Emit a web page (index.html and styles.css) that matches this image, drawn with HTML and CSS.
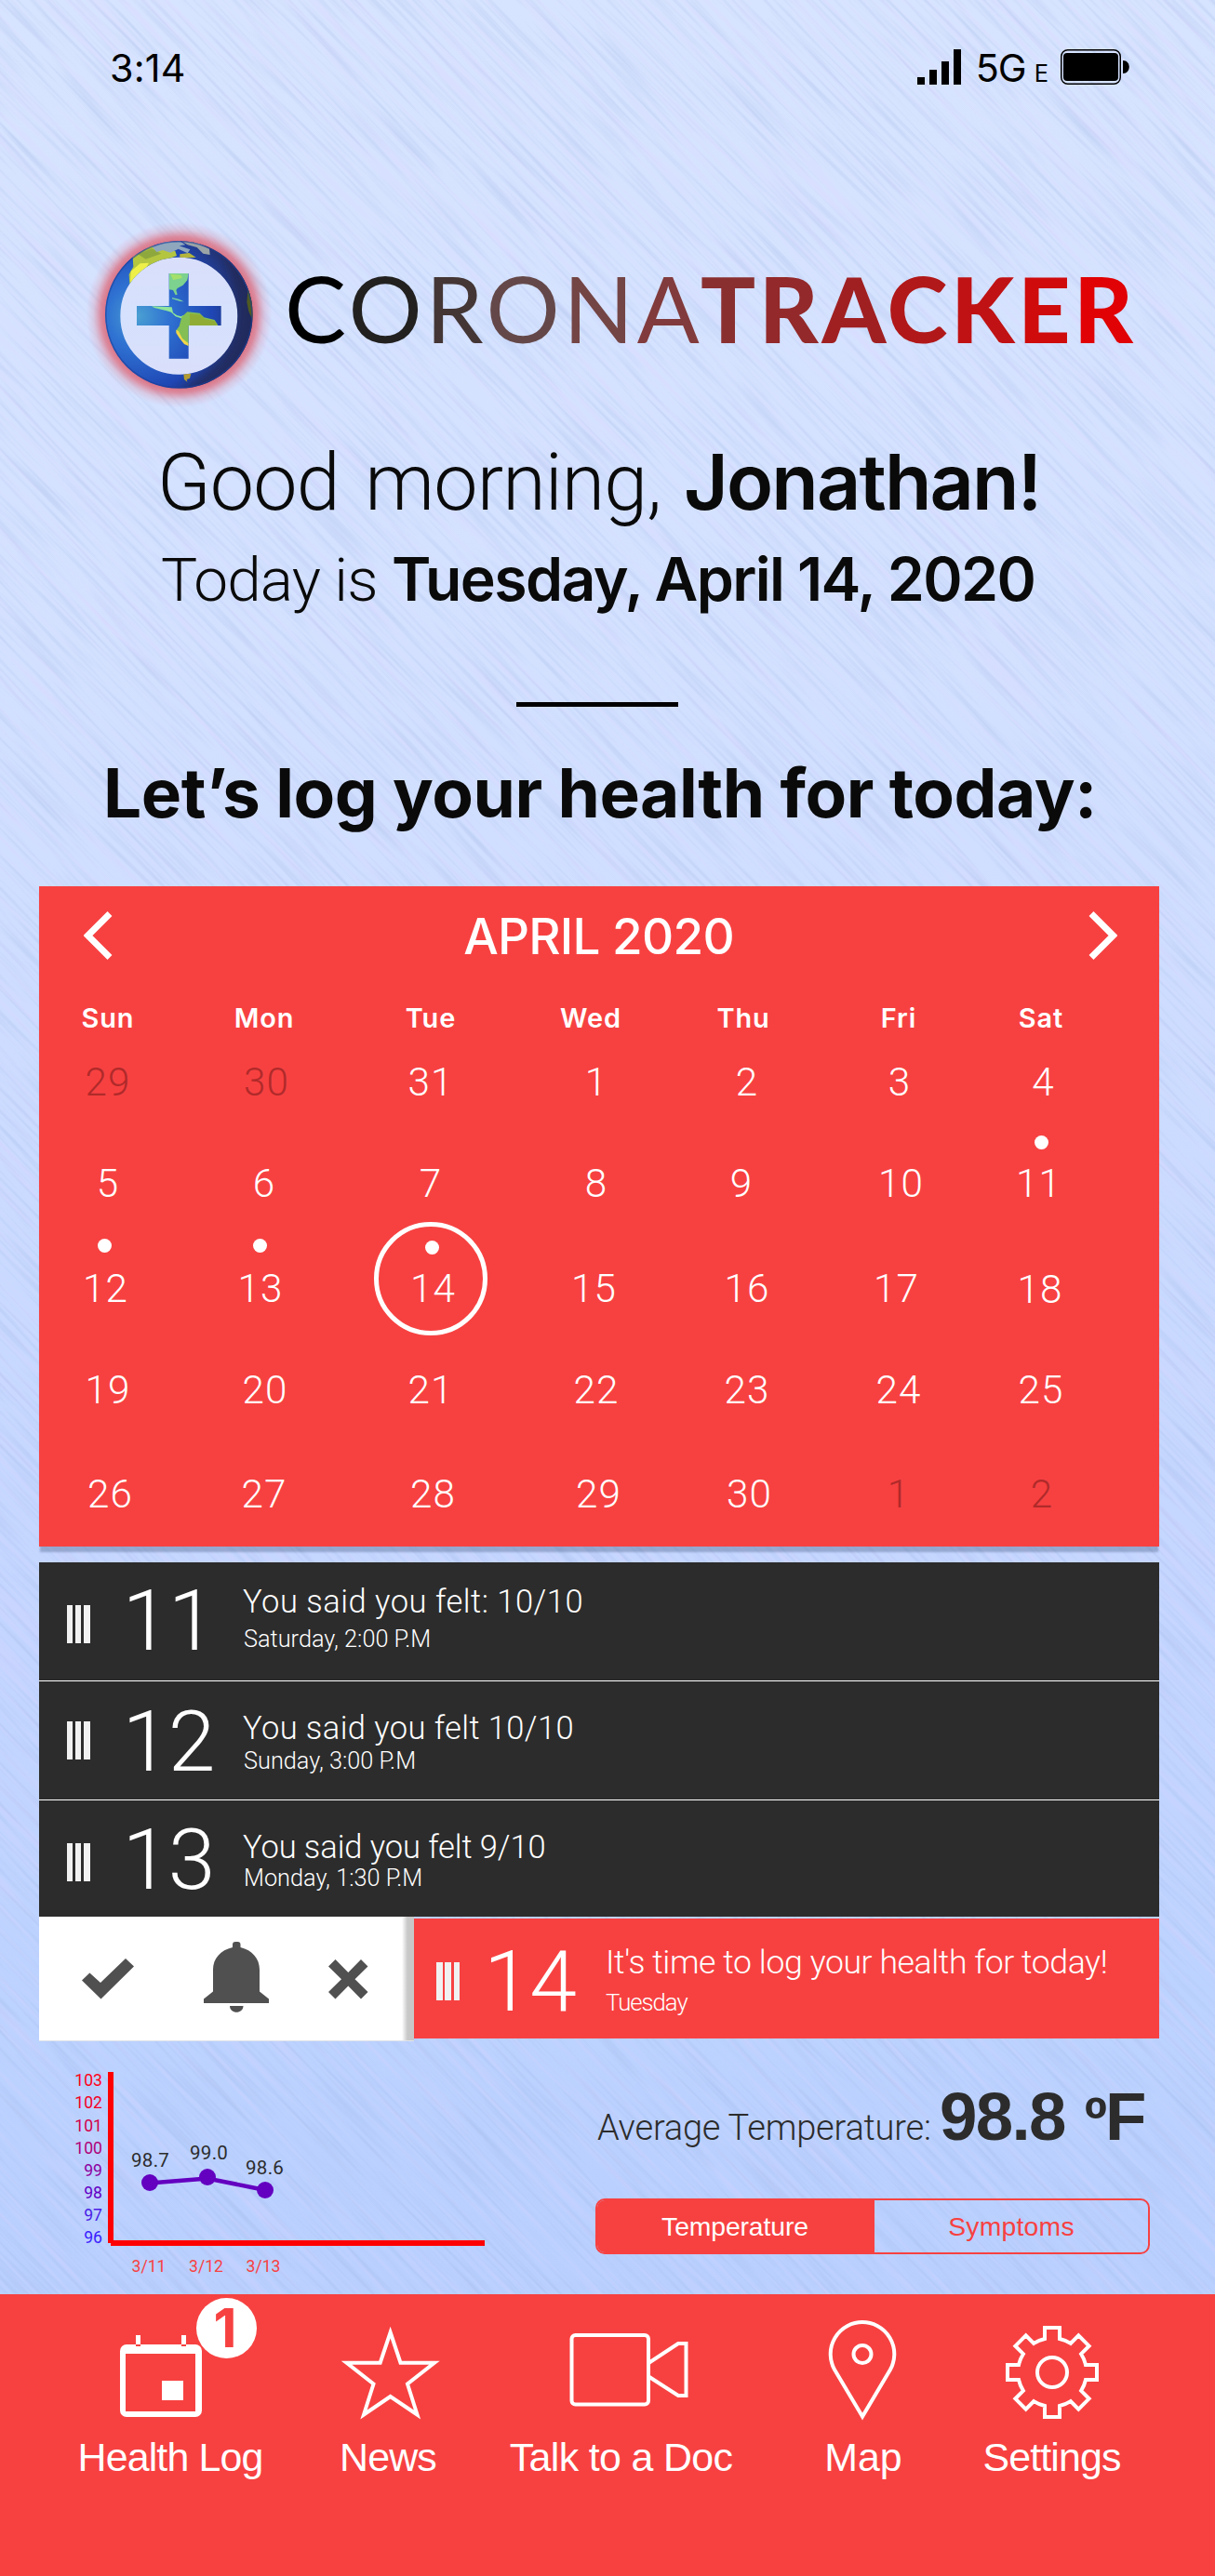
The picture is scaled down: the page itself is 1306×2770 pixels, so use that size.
FILE: index.html
```html
<!DOCTYPE html>
<html lang="en">
<head>
<meta charset="utf-8">
<title>CoronaTracker – Health Log</title>
<link rel="stylesheet" href="styles.css">
</head>
<body>
<div class="app">
  <svg class="texture" width="1306" height="2467" viewBox="0 0 1306 2467" aria-hidden="true">
    <defs>
      <filter id="brush-dark" x="0" y="0" width="100%" height="100%" color-interpolation-filters="sRGB">
        <feTurbulence type="fractalNoise" baseFrequency="0.008 0.24" numOctaves="2" seed="4"/>
        <feColorMatrix values="0 0 0 0 0.6  0 0 0 0 0.7  0 0 0 0 0.88  0.75 0 0 0 -0.35"/>
      </filter>
      <filter id="brush-light" x="0" y="0" width="100%" height="100%" color-interpolation-filters="sRGB">
        <feTurbulence type="fractalNoise" baseFrequency="0.006 0.17" numOctaves="2" seed="19"/>
        <feColorMatrix values="0 0 0 0 0.88  0 0 0 0 0.82  0 0 0 0 1  0.8 0 0 0 -0.38"/>
      </filter>
    </defs>
    <g transform="translate(653 1233) rotate(46)">
      <rect x="-1450" y="-1450" width="2900" height="2900" filter="url(#brush-light)"/>
      <rect x="-1450" y="-1450" width="2900" height="2900" filter="url(#brush-dark)"/>
    </g>
  </svg>

  <header class="status">
    <span class="status-time">3:14</span>
    <span class="status-right">
      <svg width="47" height="38" viewBox="0 0 47 38"><path d="M0 30h8v8H0zM13 22h8v16h-8zM26 13h8v25h-8zM39 0h8v38h-8z"/></svg>
      <span class="status-net">5G<small>E</small></span>
      <svg width="75" height="38" viewBox="0 0 75 38"><rect x=".75" y=".75" width="63.5" height="36.5" rx="7" fill="none" stroke="#000" stroke-width="1.5"/><rect x="3" y="4" width="59" height="30" rx="4"/><path d="M67 12c9 0 9 14 0 14z"/></svg>
    </span>
  </header>

  <div class="brand">
    <svg class="globe" width="220" height="220" viewBox="82 228 220 220">
      <defs>
        <radialGradient id="glow" gradientUnits="userSpaceOnUse" cx="192.4" cy="338.4" r="100">
          <stop offset=".77" stop-color="#dd6576" stop-opacity=".95"/>
          <stop offset=".84" stop-color="#dd6f80" stop-opacity=".75"/>
          <stop offset=".92" stop-color="#dd7f92" stop-opacity=".25"/>
          <stop offset="1" stop-color="#dd8fa5" stop-opacity="0"/>
        </radialGradient>
        <radialGradient id="sea" gradientUnits="userSpaceOnUse" cx="205" cy="360" r="400">
          <stop offset="0" stop-color="#4aa0d2"/>
          <stop offset=".25" stop-color="#2f72d2"/>
          <stop offset=".6" stop-color="#1f46b4"/>
          <stop offset=".85" stop-color="#243068"/>
          <stop offset="1" stop-color="#1c2648"/>
        </radialGradient>
        <linearGradient id="hole" x1="0" y1="0" x2="0" y2="1">
          <stop offset="0" stop-color="#dadffa"/><stop offset=".5" stop-color="#d5e1fd"/><stop offset="1" stop-color="#dadffa"/>
        </linearGradient>
        <clipPath id="shape">
          <path clip-rule="evenodd" d="M99 355a238 238 0 1 0 476 0a238 238 0 1 0-476 0zM148 359a189 189 0 1 1 378 0a189 189 0 1 1-378 0z"/>
          <path d="M305 222h63v105h105v63H368v107h-63V390H201v-63h104z"/>
        </clipPath>
        <filter id="soft"><feGaussianBlur stdDeviation="1.6"/></filter>
        <filter id="haze"><feGaussianBlur stdDeviation="14"/></filter>
      </defs>
      <circle cx="192.4" cy="338.4" r="100" fill="url(#glow)"/>
      <circle cx="192.3" cy="339.7" r="64" fill="url(#hole)"/>
      <g transform="translate(80 220) scale(.33333)" clip-path="url(#shape)">
        <rect x="95" y="110" width="490" height="490" fill="url(#sea)"/>
        <path d="M490 160Q540 300 522 410Q490 520 330 600H600V160z" fill="#242c5c" filter="url(#haze)" opacity=".75"/>
        <g filter="url(#soft)">
          <path d="M188 168L250 132L300 150L325 150L330 165L290 180L240 200L205 235L178 255L176 225L190 200z" fill="#b4c63f"/>
          <path d="M182 215L212 190L240 188L225 215L180 252z" fill="#eef04a"/>
          <path d="M205 160l45-18 30 16-50 18z" fill="#8fa83c"/>
          <path d="M250 135l40-14 50-3 18 12-20 3 35 12-8 12-30-14-25 12-25-8-20 6z" fill="#8ea7bd"/>
          <path d="M345 118l50 4 40 20 2 20-22-4-20-20-30-8z" fill="#9aa3a6"/>
          <path d="M340 160l30-4 22 14-52 4z" fill="#b4b53c"/>
          <path d="M305 222l63 0-4 22-14 16-18 10-4 6 4 14-6 2-8-16-13-2z" fill="#7cd28e"/>
          <path d="M310 224l34 3 4 10-30 6z" fill="#a6e06c"/>
          <path d="M315 300l22 5 16 8-12-1-26-8z" fill="#79cfa0"/>
          <path d="M248 328l66 3 4 18 12 8 14 4 6-4 4 6-10 4-18-6-14-14-14-4-40-10z" fill="#8fe49a"/>
          <path d="M346 362l18-16 40 4 14 14 34 8 10 16-2 12H368v56l-14-8-18-26-8-16 10-14z" fill="#83bf55"/>
          <path d="M372 352l34 3 14 14 32 6 10 14-90 2z" fill="#91ac35"/>
          <path d="M328 404l8 4 12 24 20 16v8l-14-6-16-20-10-16z" fill="#f0d64a"/>
          <path d="M352 546h24l-4 14-10 4 2 8-10-8z" fill="#b49c32"/>
          <path d="M560 270l14 20 4 90-16-36-6-30z" fill="#4f5a22"/>
        </g>
        <circle cx="337" cy="355" r="236" fill="none" stroke="#1b3f96" stroke-opacity=".6" stroke-width="5"/>
      </g>
    </svg>
    <h1 class="wordmark"><span class="light"><i class="c1">C</i><i class="c2">O</i><i class="c3">R</i><i class="c4">O</i><i class="c5">N</i><i class="c6">A</i></span><span class="heavy"><i class="c7">T</i><i class="c8">R</i><i class="c9">A</i><i class="c10">C</i><i class="c11">K</i><i class="c12">E</i><i class="c13">R</i></span></h1>
  </div>

  <p class="greeting"><span class="greeting-lead">Good morning,</span><strong>Jonathan!</strong></p>
  <p class="today"><span class="today-lead">Today is</span><strong>Tuesday, April 14, 2020</strong></p>
  <div class="rule"></div>
  <h2 class="prompt">Let’s log your health for today:</h2>

  <section class="calendar">
    <div class="cal-head">
      <svg width="31" height="52" viewBox="0 0 31 52"><path d="M28 2.500L4.500 26L28 49.500" /></svg>
      <span>APRIL 2020</span>
      <svg width="31" height="52" viewBox="0 0 31 52"><path d="M3 2.500L26.500 26L3 49.500" /></svg>
    </div>
    <div class="week names"><span>Sun</span><span>Mon</span><span>Tue</span><span class="l6">Wed</span><span class="l4">Thu</span><span>Fri</span><span>Sat</span></div>
    <div class="week w1"><span class="dim">29</span><span class="dim r2">30</span><span>31</span><span>1</span><span>2</span><span class="r1">3</span><span class="r2">4</span></div>
    <div class="week w2"><span>5</span><span>6</span><span>7</span><span>8</span><span class="l6">9</span><span class="r2">10</span><span class="l2"><b class="day">11<em class="dot d11"></em></b></span></div>
    <div class="week w3"><span class="l2"><b class="day">12<em class="dot"></em></b></span><span class="l4"><b class="day">13<em class="dot"></em></b></span><span class="r2"><b class="day">14<em class="dot d14"></em><em class="ring"></em></b></span><span class="l2">15</span><span>16</span><span class="l2">17</span><span class="w18">18</span></div>
    <div class="week w4"><span>19</span><span class="r1">20</span><span>21</span><span>22</span><span>23</span><span>24</span><span>25</span></div>
    <div class="week w5"><span class="r2">26</span><span>27</span><span class="r2">28</span><span class="r2">29</span><span class="r2">30</span><span class="dim">1</span><span class="dim r1">2</span></div>
  </section>

  <section class="log">
    <div class="entry e11">
      <div class="grip"><i></i><i></i><i></i></div><div class="num">11</div>
      <div class="txt"><p class="title">You said you felt: 10/10</p><p class="sub">Saturday, 2:00 P.M</p></div>
    </div>
    <div class="entry e12">
      <div class="grip"><i></i><i></i><i></i></div><div class="num">12</div>
      <div class="txt"><p class="title">You said you felt 10/10</p><p class="sub">Sunday, 3:00 P.M</p></div>
    </div>
    <div class="entry e13">
      <div class="grip"><i></i><i></i><i></i></div><div class="num">13</div>
      <div class="txt"><p class="title">You said you felt 9/10</p><p class="sub">Monday, 1:30 P.M</p></div>
    </div>
    <div class="swiped">
      <div class="actions">
        <svg class="check" width="56" height="44" viewBox="0 0 56 44"><path d="M0 23.500L8.400 15.500L20 26L47 0L56 8.500L20.500 43.500z"/></svg>
        <svg class="bell" width="70" height="76" viewBox="0 0 70 76"><path d="M31 6V3q0-3 3-3h2.500q3 0 3 3v3C52 9 60 18 60 30V53.500L70 61.500V66H0V61.500L10 53.500V30C10 18 18 9 31 6zM28 69h14.500c0 9-14.500 9-14.500 0z"/></svg>
        <svg class="cross" width="43" height="43" viewBox="0 0 43 43"><path d="M0 7.500L7.500 0L21.300 14L35 0L42.500 7.500L28.500 21.300L42.500 35L35 42.500L21.300 28.500L7.500 42.500L0 35L14 21.300z"/></svg>
      </div>
      <div class="entry e14">
        <div class="grip"><i></i><i></i><i></i></div><div class="num">14</div>
        <div class="txt"><p class="title">It's time to log your health for today!</p><p class="sub">Tuesday</p></div>
      </div>
    </div>
  </section>

  <section class="stats">
    <svg class="chart" width="640" height="272" viewBox="0 2195 640 272">
      <path d="M119 2228V2412M119 2412H521" fill="none" stroke="#f00" stroke-width="6"/>
      <g class="y-axis">
        <text x="110" y="2243" fill="#ff0016">103</text>
        <text x="110" y="2267" fill="#f4001f">102</text>
        <text x="110" y="2291.500" fill="#d2004a">101</text>
        <text x="110" y="2315.500" fill="#b00078">100</text>
        <text x="110" y="2339.500" fill="#8e00a0">99</text>
        <text x="110" y="2364" fill="#6400c4">98</text>
        <text x="110" y="2388" fill="#4a1ce6">97</text>
        <text x="110" y="2412" fill="#3a20ff">96</text>
      </g>
      <g class="x-axis"><text x="141.500" y="2443">3/11</text><text x="203" y="2443">3/12</text><text x="264.500" y="2443">3/13</text></g>
      <path d="M161 2347.500L223 2342.500L285 2355" fill="none" stroke="#6400c0" stroke-width="4.500"/>
      <g fill="#6400c0"><circle cx="161" cy="2347" r="9"/><circle cx="223" cy="2341" r="9"/><circle cx="285" cy="2355" r="9"/></g>
      <g class="values"><text x="141" y="2330">98.7</text><text x="204" y="2322">99.0</text><text x="264" y="2338">98.6</text></g>
    </svg>
    <div class="summary">
      <p class="average"><span class="avg-label">Average Temperature:</span><strong>98.8</strong><strong class="deg">º</strong><strong>F</strong></p>
      <div class="segmented"><span class="on">Temperature</span><span>Symptoms</span></div>
    </div>
  </section>

  <nav class="tabs">
    <div class="tab t1">
      <svg width="246" height="150" viewBox="60 2467 246 150">
        <path fill="#fff" fill-rule="evenodd" d="M136 2521h74a7 7 0 0 1 7 7v64a7 7 0 0 1-7 7h-74a7 7 0 0 1-7-7v-64a7 7 0 0 1 7-7zM135 2531v62h75v-62zM146 2511h5v12h-5zM195 2511h5v12h-5zM174 2560h23v21h-23z"/>
        <circle cx="243.500" cy="2503.500" r="32.500" fill="#fff"/>
        <text class="badge" x="242" y="2524">1</text>
      </svg>
      <span>Health Log</span>
    </div>
    <div class="tab t2">
      <svg class="line" width="224" height="150" viewBox="306 2467 224 150"><path d="M419.600 2508L430.500 2540.700H467L438 2563.500L448.500 2596.500L419.600 2577L391 2596.500L401.500 2563.500L372.500 2540.700H408.700z"/></svg>
      <span>News</span>
    </div>
    <div class="tab t3">
      <svg class="line" width="275" height="150" viewBox="530 2467 275 150"><rect x="614.500" y="2511" width="82.500" height="74.500" rx="4"/><path d="M698 2540.500L729 2520H737.500V2576H729L698 2556"/></svg>
      <span>Talk to a Doc</span>
    </div>
    <div class="tab t4">
      <svg class="line" width="248" height="150" viewBox="805 2467 248 150"><path d="M927 2598.500L897 2548A34.300 34.300 0 1 1 957 2548z"/><circle cx="927" cy="2531.500" r="9.500"/></svg>
      <span>Map</span>
    </div>
    <div class="tab t5">
      <svg class="line" width="157" height="150" viewBox="1053 2467 157 150"><g transform="translate(1131 2551)"><path d="M36-8H48V8H36A37 37 0 0 1 31.100 19.800L39.600 28.300L28.300 39.600L19.800 31.100A37 37 0 0 1 8 36V48H-8V36A37 37 0 0 1-19.800 31.100L-28.300 39.600L-39.600 28.300L-31.100 19.800A37 37 0 0 1-36 8H-48V-8H-36A37 37 0 0 1-31.100-19.800L-39.600-28.300L-28.300-39.600L-19.800-31.100A37 37 0 0 1-8-36V-48H8V-36A37 37 0 0 1 19.800-31.100L28.300-39.600L39.600-28.300L31.100-19.800A37 37 0 0 1 36-8z"/><circle r="16"/></g></svg>
      <span>Settings</span>
    </div>
  </nav>
</div>
</body>
</html>
```
FILE: styles.css
```css
* { box-sizing: border-box; }
body { margin: 0; }
p, h1, h2 { margin: 0; font-weight: inherit; }
svg { display: block; flex: none; }

.app {
  position: relative;
  width: 1306px;
  height: 2770px;
  overflow: hidden;
  display: flex;
  flex-direction: column;
  background: linear-gradient(#d7e4ff 0, #d3e1ff 700px, #c6d7ff 1600px, #bad1ff 2300px, #b9d0ff 2467px);
  color: #0a0a0a;
  font-family: "Liberation Sans", Arial, sans-serif;
  white-space: nowrap;
}
.app > * { position: relative; flex: none; }
.app > .texture { position: absolute; left: 0; top: 0; }

/* status bar */
.status {
  height: 146px;
  padding: 0 91px 0 118px;
  display: flex;
  align-items: center;
  justify-content: space-between;
  font-family: Inter, sans-serif;
  font-size: 41.3px;
  color: #000;
}
.status-time { letter-spacing: 0.2px; }
.status-right { display: flex; align-items: center; gap: 14px; margin-top: -2px; }
.status-net { letter-spacing: -1px; margin: 0 -1px 0 2px; padding-top: 2px; }
.status-net small { font-size: 25.5px; margin-left: 9px; letter-spacing: 0; }

/* brand */
.brand { margin-top: 82px; padding-left: 82px; height: 220px; display: flex; align-items: center; }
.wordmark { display: flex; margin-left: 4px; padding-bottom: 14px; font-family: Lato, sans-serif; line-height: 110px; }
.wordmark i { font-style: normal; }
.light { width: 447px; font-size: 99px; font-weight: 400; letter-spacing: 3.7px; }
.heavy { font-size: 98px; font-weight: 900; letter-spacing: 3.8px; }
.c1 { color: #000; } .c2 { color: #222120; } .c3 { color: #433635; } .c4 { color: #644849; }
.c5 { color: #744545; } .c6 { color: #823b3c; } .c7 { color: #8a2f30; } .c8 { color: #93292a; }
.c9 { color: #a02022; } .c10 { color: #b11819; } .c11 { color: #c01214; } .c12 { color: #cf0b0c; } .c13 { color: #e00204; }

/* greeting */
.greeting, .today { display: flex; align-items: baseline; }
.greeting { height: 100px; margin-top: 20px; padding-left: 169px; }
.greeting-lead { width: 566px; font: 300 84.4px/100px Roboto, sans-serif; letter-spacing: -0.9px; word-spacing: 8px; }
.greeting strong { font: 600 82.5px/100px Inter, sans-serif; letter-spacing: -1.85px; }
.today { height: 80px; margin-top: 15px; padding-left: 173px; }
.today-lead { width: 248px; font: 300 65.7px/80px Roboto, sans-serif; letter-spacing: -0.85px; }
.today strong { font: 600 64.3px/80px Inter, sans-serif; letter-spacing: -1.6px; }
.rule { width: 174px; height: 5px; margin: 92px 0 0 555px; background: #000; }
.prompt { margin-top: 48px; padding-left: 111px; font: 700 72.9px/90px Inter, sans-serif; letter-spacing: -0.45px; }

/* calendar */
.calendar {
  width: 1204px;
  height: 710px;
  margin: 55px 0 0 42px;
  background: #f74141;
  color: #fff;
  box-shadow: 0 7px 2px -1px rgba(70, 95, 135, 0.38);
}
.cal-head {
  height: 106px;
  padding: 0 45px 0 48px;
  display: flex;
  align-items: center;
  justify-content: space-between;
  font: 500 53px/60px Inter, sans-serif;
  letter-spacing: -0.75px;
}
.cal-head span { margin-right: 4px; padding-top: 1px; }
.cal-head path { fill: none; stroke: #fff; stroke-width: 7; }
.week {
  display: grid;
  grid-template-columns: 148px 188px 170px 186px 138px 188px 118px;
  font: 300 42.2px/48px Roboto, sans-serif;
  letter-spacing: 1.2px;
}
.week > span { display: flex; align-items: center; justify-content: center; padding-top: 2px; }
.names { height: 50px; padding-top: 18px; font: 600 28.9px/31px Inter, sans-serif; letter-spacing: 0.9px; }
.w1 { height: 108px; }
.w2 { height: 110px; }
.w3 { height: 116px; }
.w4 { height: 102px; }
.w5 { height: 118px; padding-top: 4px; }
.week .dim { color: #b02a2a; }
.week .r1 { padding-left: 2px; }
.week .r2 { padding-left: 5px; }
.week .l2 { padding-right: 5px; }
.week .l4 { padding-right: 8px; }
.week .l6 { padding-right: 12px; }
.week .w18 { padding-top: 4px; padding-right: 2px; }
.day { position: relative; font-weight: 300; }
.dot {
  position: absolute;
  left: calc(50% - 8px);
  top: -30px;
  width: 15px;
  height: 15px;
  border-radius: 50%;
  background: #fff;
}
.d11 { left: calc(50% - 4px); top: -28px; }
.d14 { top: -28px; }
.ring {
  position: absolute;
  left: calc(50% - 63.5px);
  top: -48px;
  width: 122px;
  height: 122px;
  border: 5px solid #fff;
  border-radius: 50%;
}

/* log entries */
.log { width: 1204px; margin: 17px 0 0 42px; color: #fff; }
.entry { display: flex; align-items: flex-start; background: #2c2c2c; padding-left: 29.5px; }
.grip { width: 25px; height: 41px; display: flex; gap: 2.75px; }
.grip i { flex: 1; background: #f1f1f1; }
.num { width: 129.500px; margin-left: 35px; font: 300 91.4px/100px Roboto, sans-serif; letter-spacing: -1.5px; }
.txt { padding-right: 20px; }
.title { font: 300 34.5px/40px Roboto, sans-serif; letter-spacing: 0.5px; }
.sub { padding-left: 1px; font: 300 25.3px/30px Roboto, sans-serif; }
.e11 { height: 128px; border-bottom: 1px solid #fff; }
.e11 .grip { margin-top: 46px; }
.e11 .num { margin-top: 13px; }
.e11 .title { margin-top: 22px; }
.e11 .sub { margin-top: 6px; }
.e12 { height: 128px; border-bottom: 1px solid #fff; }
.e12 .grip { margin-top: 43px; }
.e12 .num { margin-top: 15px; }
.e12 .title { margin-top: 30px; letter-spacing: 0.4px; }
.e12 .sub { margin-top: 1px; }
.e13 { height: 125px; }
.e13 .grip { margin-top: 46px; }
.e13 .num { margin-top: 14px; }
.e13 .title { margin-top: 30px; letter-spacing: -0.1px; }
.e13 .sub { margin-top: -1px; }
.swiped { display: flex; align-items: flex-start; }
.actions {
  width: 403px;
  height: 134px;
  padding-left: 46px;
  display: flex;
  align-items: flex-start;
  background: linear-gradient(90deg, #fff 390px, #c8c8c8 396px, #c8c8c8 403px);
  border-bottom: 1px solid #dfe3ea;
  fill: #505050;
}
.check { margin-top: 45px; }
.bell { margin: 27px 64px 0 75px; }
.cross { margin-top: 46px; }
.e14 { flex: 1; height: 129px; margin-top: 2px; padding-left: 24px; background: #f74141; }
.e14 .grip { margin-top: 47px; }
.e14 .num { margin: 18px 0 0 26px; width: 131px; }
.e14 .title { margin-top: 27px; font-size: 35.6px; letter-spacing: -0.4px; }
.e14 .sub { margin-top: 8px; padding-left: 0; font-size: 25.7px; letter-spacing: -1px; }

/* statistics */
.stats { height: 272px; display: flex; align-items: flex-start; }
.chart { font-family: Roboto, sans-serif; }
.y-axis { font-size: 17.600px; text-anchor: end; }
.x-axis { font-size: 17.600px; fill: #f74141; }
.values { font-size: 20.500px; letter-spacing: 0.3px; fill: #2c2c2c; }
.summary { width: 596px; color: #2c2c2c; }
.average { height: 80px; margin-top: 41px; padding-left: 2px; display: flex; align-items: baseline; line-height: 80px; }
.avg-label { width: 368px; font: 300 38px/80px Roboto, sans-serif; letter-spacing: -0.2px; }
.average strong { font-size: 72.7px; letter-spacing: -1.7px; }
.average .deg { margin-left: 21px; font-size: 66px; }
.segmented {
  height: 60px;
  margin-top: 48px;
  display: flex;
  border: 2px solid #f74141;
  border-radius: 10px;
  overflow: hidden;
  color: #f74141;
  font-size: 28.3px;
  line-height: 56px;
  text-align: center;
  letter-spacing: 0.25px;
}
.segmented span { flex: 1; }
.segmented .on { flex: 0 0 298px; padding-right: 2px; background: #f74141; color: #fff; letter-spacing: -0.1px; }

/* tab bar */
.tabs {
  height: 303px;
  padding-left: 60px;
  display: grid;
  grid-template-columns: 246px 224px 275px 248px 157px;
  background: #f74141;
  color: #fff;
  font-size: 42.9px;
  line-height: 50px;
  letter-spacing: -0.85px;
  text-align: center;
}
.tab span { display: block; }
.t2 span, .t4 span, .t5 span { padding-right: 2px; }
.t3 { letter-spacing: -0.65px; }
.t4 { letter-spacing: 0; }
.line { fill: none; stroke: #fff; stroke-width: 4; }
.badge { font-family: Inter, sans-serif; font-size: 58px; font-weight: 700; fill: #f74141; text-anchor: middle; letter-spacing: 0; }
```
